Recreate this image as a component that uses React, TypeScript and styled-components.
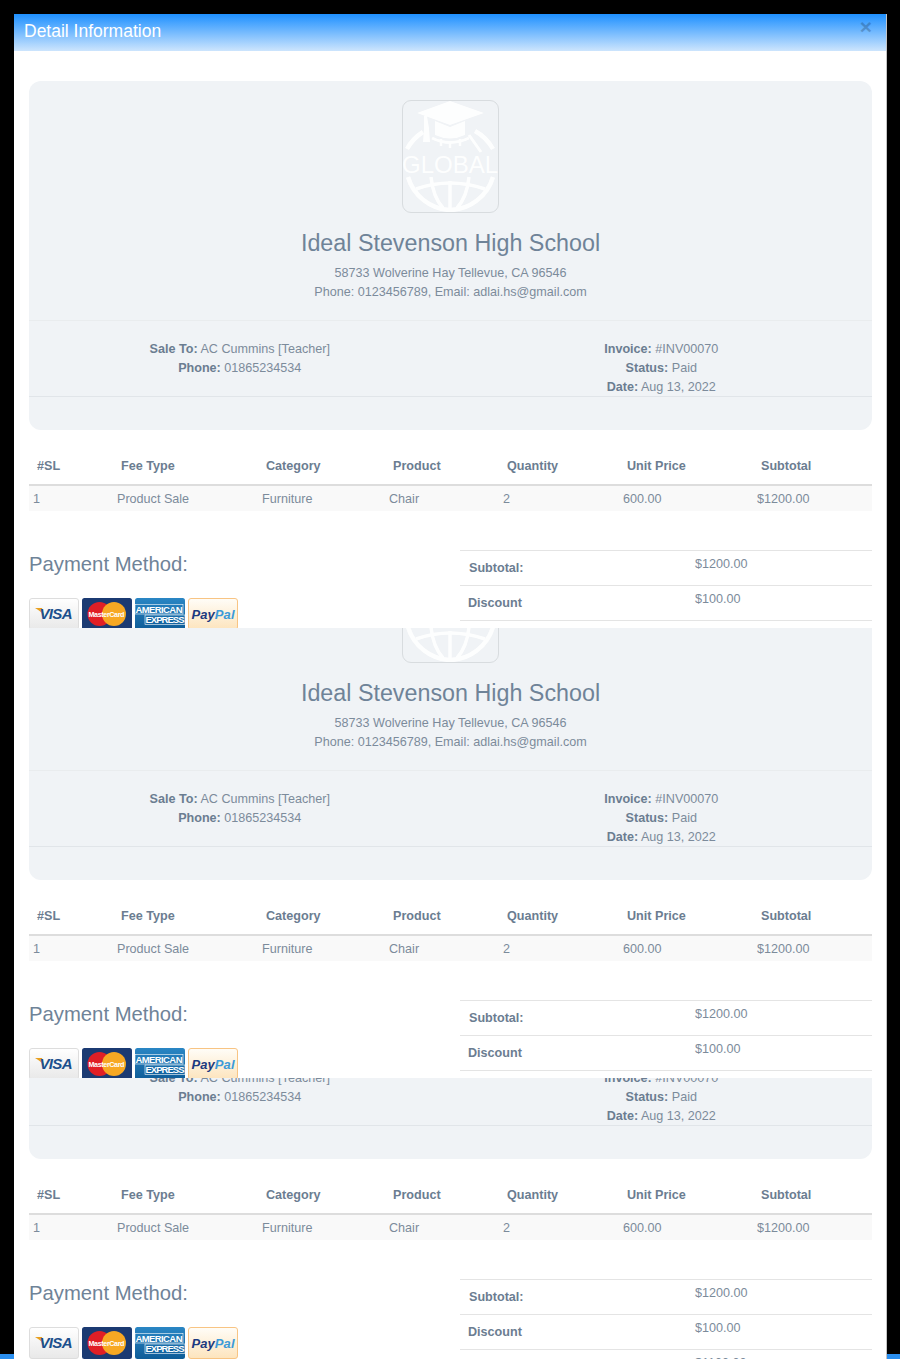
import styled, { createGlobalStyle } from 'styled-components';

const GlobalStyle = createGlobalStyle`
  html, body {
    margin: 0;
    padding: 0;
    background: #000;
  }

  * {
    box-sizing: border-box;
  }
`;

const Backdrop = styled.div`
  height: 1359px;
  padding-top: 14px;
  overflow: hidden;
  background: linear-gradient(#000 1354px, #2a8ff0 1354px);
  font-family: "Liberation Sans", Arial, sans-serif;
  font-size: 12.6px;
  line-height: 19px;
  color: #7c8b9b;
`;

const Modal = styled.div`
  width: 873px;
  height: 1345px;
  margin-left: 14px;
  background: #fff;
  border-right: 1px solid #c4c4c4;
`;

const ModalHeader = styled.div`
  height: 37px;
  padding: 0 14px 2px 10px;
  display: flex;
  align-items: center;
  justify-content: space-between;
  background: linear-gradient(#1e90ff, #cde5fd);
`;

const ModalTitle = styled.h4`
  margin: 0;
  font-size: 17.5px;
  font-weight: 400;
  color: #fff;
`;

const CloseButton = styled.button`
  margin: -10px 0 0;
  padding: 0;
  border: 0;
  background: none;
  font-family: inherit;
  font-size: 21px;
  line-height: 1;
  font-weight: 700;
  color: #000;
  opacity: 0.2;
`;

const ModalBody = styled.div`
  padding: 30px 14px 0 15px;
`;

const Slice = styled.div<{ $height: number; $skip: number }>`
  height: ${p => p.$height}px;
  overflow: hidden;

  & > div {
    margin-top: ${p => -p.$skip}px;
  }
`;

const HeaderCard = styled.div`
  height: 349px;
  padding-top: 19px;
  background: #f0f3f6;
  border-radius: 12px;
  text-align: center;
`;

const LogoBox = styled.div`
  width: 97px;
  height: 113px;
  margin: 0 auto;
  border: 1px solid #d8dcdf;
  border-radius: 9px;
`;

const LogoSvg = styled.svg`
  display: block;
  width: 95px;
  height: 111px;
`;

const SchoolName = styled.h2`
  margin: 13px 0 0;
  font-size: 23.3px;
  line-height: 34px;
  font-weight: 400;
  color: #6f8398;
`;

const Address = styled.p`
  margin: 4px 0 0;
`;

const InfoRow = styled.div`
  display: grid;
  grid-template-columns: 1fr 1fr;
  height: 77px;
  margin-top: 18px;
  padding-top: 19px;
  border-top: 1px solid #e9ecee;
  border-bottom: 1px solid #e1e5e9;
`;

const InfoLine = styled.div``;

const Strong = styled.b`
  color: #6b7d91;
`;

const ItemsTable = styled.table`
  width: 100%;
  margin-top: 20px;
  border-collapse: collapse;
  table-layout: fixed;
`;

const Th = styled.th<{ $width: number }>`
  width: ${p => p.$width}px;
  height: 35px;
  padding: 0 8px 2px;
  text-align: left;
  font-weight: 700;
  color: #6b7d91;
  border-bottom: 2px solid #ddd;
`;

const Td = styled.td`
  height: 26px;
  padding: 1px 4px 0;
  background: #f9f9f9;
`;

const PaymentRow = styled.div`
  display: flex;
  justify-content: space-between;
  margin-top: 39px;
`;

const PaymentLeft = styled.div`
  width: 300px;
`;

const PaymentHeading = styled.h3`
  margin: 0;
  font-size: 20.3px;
  line-height: 28px;
  font-weight: 400;
  color: #6f8398;
`;

const CardRow = styled.div`
  display: flex;
  gap: 3px;
  margin-top: 20px;
`;

const CardSvg = styled.svg`
  display: block;
  width: 50px;
  height: 32px;
`;

const TotalsTable = styled.div`
  width: 412px;
`;

const TotalsRow = styled.div<{ $indent: number }>`
  display: grid;
  grid-template-columns: ${p => 235 - p.$indent}px 1fr;
  height: 35px;
  border-top: 1px solid #e4e4e4;
  padding-left: ${p => p.$indent}px;
`;

const TotalsLabel = styled.b`
  padding-top: 8px;
  color: #6b7d91;
`;

const TotalsValue = styled.span`
  padding-top: 4px;
`;

const columns = [
  { title: '#SL', width: 84, value: '1' },
  { title: 'Fee Type', width: 145, value: 'Product Sale' },
  { title: 'Category', width: 127, value: 'Furniture' },
  { title: 'Product', width: 114, value: 'Chair' },
  { title: 'Quantity', width: 120, value: '2' },
  { title: 'Unit Price', width: 134, value: '600.00' },
  { title: 'Subtotal', width: 119, value: '$1200.00' },
];

const totals = [
  { label: 'Subtotal:', value: '$1200.00', indent: 9 },
  { label: 'Discount', value: '$100.00', indent: 8 },
  { label: 'Total:', value: '$1100.00', indent: 9 },
];

function Logo() {
  return (
    <LogoSvg viewBox="0 0 95 111">
      <g fill="none" stroke="#fff" strokeWidth="4.5" opacity="0.92">
        <path d="M4 48 A46 46 0 0 1 20 31" />
        <path d="M72 30 A46 46 0 0 1 90 48" />
        <path d="M29 37 Q47 46 66 37" strokeWidth="3" />
        <path d="M38 38 V45 M47 40 V47 M57 38 V45" strokeWidth="2.5" />
        <path d="M66 34 L78 51" strokeWidth="3" />
        <path d="M5 76 A46 46 0 0 0 47 109 A46 46 0 0 0 90 76" />
        <path d="M13 88 Q47 76 82 88" strokeWidth="3.5" />
        <path d="M47 80 V108" strokeWidth="3.5" />
        <path d="M28 76 Q30 96 40 107" strokeWidth="3.5" />
        <path d="M66 76 Q64 96 54 107" strokeWidth="3.5" />
      </g>
      <g fill="#fff" opacity="0.92">
        <path d="M47 0 L81 12 L47 24 L14 12 Z" />
        <path d="M32 20 L47 26 L62 20 V34 Q47 41 32 34 Z" />
        <path d="M21 15 L24 15 L26 27 L27 41 L20 41 L21 27 Z" />
        <text x="47" y="72" textAnchor="middle" fontFamily="Liberation Sans, sans-serif" fontSize="24">
          GLOBAL
        </text>
      </g>
    </LogoSvg>
  );
}

function VisaCard() {
  return (
    <CardSvg viewBox="0 0 50 32">
      <defs>
        <linearGradient id="visaBg" x1="0" y1="0" x2="0" y2="1">
          <stop offset="0" stopColor="#fff" />
          <stop offset="1" stopColor="#e8e8e8" />
        </linearGradient>
      </defs>
      <rect x="0.5" y="0.5" width="49" height="31" rx="2.5" fill="url(#visaBg)" stroke="#ddd" />
      <path d="M6 10 H13 L15 18 Q12 13 6 10 Z" fill="#e8a020" />
      <text x="27" y="21" textAnchor="middle" fontFamily="Liberation Sans, sans-serif" fontSize="15" fontWeight="700" fontStyle="italic" textLength="33" fill="#1b4f8c">
        VISA
      </text>
    </CardSvg>
  );
}

function MasterCardCard() {
  return (
    <CardSvg viewBox="0 0 50 32">
      <rect width="50" height="32" rx="2.5" fill="#1b3a72" />
      <circle cx="17.5" cy="16" r="12" fill="#e01f26" />
      <circle cx="32" cy="16" r="12" fill="#f7a823" />
      <text x="24.5" y="18.5" textAnchor="middle" fontFamily="Liberation Sans, sans-serif" fontSize="7.2" fontWeight="700" textLength="36" fill="#fff">
        MasterCard
      </text>
    </CardSvg>
  );
}

function AmexCard() {
  return (
    <CardSvg viewBox="0 0 50 32">
      <defs>
        <linearGradient id="amexBg" x1="0" y1="0" x2="0" y2="1">
          <stop offset="0" stopColor="#2a86c4" />
          <stop offset="1" stopColor="#0e5c98" />
        </linearGradient>
      </defs>
      <rect width="50" height="32" rx="2.5" fill="url(#amexBg)" />
      <rect x="0" y="6.5" width="48" height="9.5" fill="none" stroke="#fff" strokeWidth="0.6" />
      <rect x="10" y="17" width="40" height="9.5" fill="none" stroke="#fff" strokeWidth="0.6" />
      <text x="24" y="14.5" textAnchor="middle" fontFamily="Liberation Sans, sans-serif" fontSize="9.5" fontWeight="700" textLength="47" fill="#fff">
        AMERICAN
      </text>
      <text x="30" y="25" textAnchor="middle" fontFamily="Liberation Sans, sans-serif" fontSize="9.5" fontWeight="700" textLength="39" fill="#fff">
        EXPRESS
      </text>
    </CardSvg>
  );
}

function PayPalCard() {
  return (
    <CardSvg viewBox="0 0 50 32">
      <defs>
        <linearGradient id="paypalBg" x1="0" y1="0" x2="0" y2="1">
          <stop offset="0" stopColor="#fffdf8" />
          <stop offset="1" stopColor="#fde4bd" />
        </linearGradient>
      </defs>
      <rect x="0.5" y="0.5" width="49" height="31" rx="2.5" fill="url(#paypalBg)" stroke="#f8c483" />
      <text x="25" y="21" textAnchor="middle" fontFamily="Liberation Sans, sans-serif" fontSize="13" fontWeight="700" fontStyle="italic" textLength="43">
        <tspan fill="#1c3a80">Pay</tspan>
        <tspan fill="#3b9ad8">Pal</tspan>
      </text>
    </CardSvg>
  );
}

function Invoice() {
  return (
    <div>
      <HeaderCard>
        <LogoBox>
          <Logo />
        </LogoBox>
        <SchoolName>Ideal Stevenson High School</SchoolName>
        <Address>
          58733 Wolverine Hay Tellevue, CA 96546
          <br />
          Phone: 0123456789, Email: adlai.hs@gmail.com
        </Address>
        <InfoRow>
          <div>
            <InfoLine><Strong>Sale To:</Strong> AC Cummins [Teacher]</InfoLine>
            <InfoLine><Strong>Phone:</Strong> 01865234534</InfoLine>
          </div>
          <div>
            <InfoLine><Strong>Invoice:</Strong> #INV00070</InfoLine>
            <InfoLine><Strong>Status:</Strong> Paid</InfoLine>
            <InfoLine><Strong>Date:</Strong> Aug 13, 2022</InfoLine>
          </div>
        </InfoRow>
      </HeaderCard>

      <ItemsTable>
        <thead>
          <tr>
            {columns.map(col => (
              <Th key={col.title} $width={col.width}>{col.title}</Th>
            ))}
          </tr>
        </thead>
        <tbody>
          <tr>
            {columns.map(col => (
              <Td key={col.title}>{col.value}</Td>
            ))}
          </tr>
        </tbody>
      </ItemsTable>

      <PaymentRow>
        <PaymentLeft>
          <PaymentHeading>Payment Method:</PaymentHeading>
          <CardRow>
            <VisaCard />
            <MasterCardCard />
            <AmexCard />
            <PayPalCard />
          </CardRow>
        </PaymentLeft>
        <TotalsTable>
          {totals.map(row => (
            <TotalsRow key={row.label} $indent={row.indent}>
              <TotalsLabel>{row.label}</TotalsLabel>
              <TotalsValue>{row.value}</TotalsValue>
            </TotalsRow>
          ))}
        </TotalsTable>
      </PaymentRow>
    </div>
  );
}

export default function App() {
  return (
    <>
      <GlobalStyle />
      <Backdrop>
        <Modal>
          <ModalHeader>
            <ModalTitle>Detail Information</ModalTitle>
            <CloseButton>×</CloseButton>
          </ModalHeader>
          <ModalBody>
            <Slice $height={547} $skip={0}>
              <Invoice />
            </Slice>
            <Slice $height={450} $skip={97}>
              <Invoice />
            </Slice>
            <Slice $height={281} $skip={268}>
              <Invoice />
            </Slice>
          </ModalBody>
        </Modal>
      </Backdrop>
    </>
  );
}
